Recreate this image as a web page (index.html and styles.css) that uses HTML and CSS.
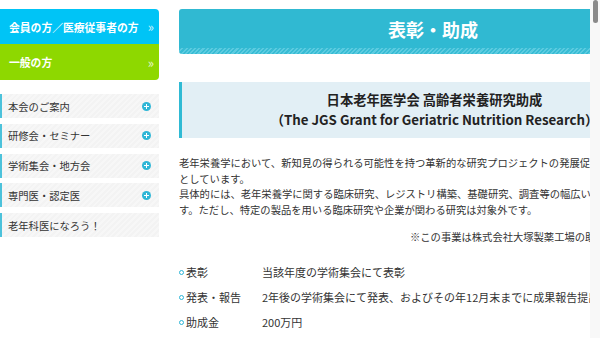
FILE: index.html
```html
<!DOCTYPE html>
<html lang="ja">
<head>
<meta charset="utf-8">
<title>表彰・助成</title>
<link rel="stylesheet" href="styles.css">
</head>
<body>
<div class="page">
  <aside class="sidebar">
    <div class="audience">
      <a class="aud aud-member" href="#"><span>会員の方／医療従事者の方</span><span class="chev">»</span></a>
      <a class="aud aud-general" href="#"><span>一般の方</span><span class="chev">»</span></a>
    </div>
    <ul class="menu">
      <li class="menu-item"><span>本会のご案内</span><span class="plus"></span></li>
      <li class="menu-item"><span>研修会・セミナー</span><span class="plus"></span></li>
      <li class="menu-item"><span>学術集会・地方会</span><span class="plus"></span></li>
      <li class="menu-item"><span>専門医・認定医</span><span class="plus"></span></li>
      <li class="menu-item"><span>老年科医になろう！</span></li>
    </ul>
  </aside>
  <main class="main">
    <h1 class="page-title">表彰・助成</h1>
    <h2 class="sub-title">日本老年医学会 高齢者栄養研究助成<br>（The JGS Grant for Geriatric Nutrition Research）</h2>
    <p class="lead">老年栄養学において、新知見の得られる可能性を持つ革新的な研究プロジェクトの発展促進を目的<br>としています。<br>具体的には、老年栄養学に関する臨床研究、レジストリ構築、基礎研究、調査等の幅広い研究を対象としていま<br>す。ただし、特定の製品を用いる臨床研究や企業が関わる研究は対象外です。</p>
    <p class="note">※この事業は株式会社大塚製薬工場の助成を受けています。</p>
    <dl class="info">
      <div class="info-row"><dt>表彰</dt><dd>当該年度の学術集会にて表彰</dd></div>
      <div class="info-row"><dt>発表・報告</dt><dd>2年後の学術集会にて発表、およびその年12月末までに成果報告提出</dd></div>
      <div class="info-row"><dt>助成金</dt><dd>200万円</dd></div>
    </dl>
  </main>
</div>
<div class="scrollbar"><div class="thumb"></div></div>
</body>
</html>
```

FILE: styles.css
```css
html, body {
  margin: 0;
  padding: 0;
  overflow: hidden;
  background: #fff;
}
body {
  font-family: "Noto Sans CJK JP", "Noto Sans", sans-serif;
  color: #333;
}
.page {
  display: flex;
  gap: 20px;
  padding-top: 9px;
  width: 687px;
}
.sidebar {
  width: 159px;
  flex: none;
}
.audience {
  border-radius: 0 4px 4px 0;
  overflow: hidden;
}
.aud {
  display: flex;
  justify-content: space-between;
  align-items: center;
  padding: 0 5px 0 9px;
  color: #fff;
  text-decoration: none;
  font-weight: bold;
  font-size: 10.8px;
}
.aud-member {
  height: 35px;
  background: #00c4f6;
}
.aud-general {
  height: 36px;
  background: #8ed800;
}
.chev {
  font-size: 13px;
  font-weight: normal;
  color: rgba(255,255,255,0.8);
}
.menu {
  list-style: none;
  margin: 14px 0 0;
  padding: 0;
  display: flex;
  flex-direction: column;
  gap: 5.8px;
}
.menu-item {
  height: 24px;
  display: flex;
  align-items: center;
  justify-content: space-between;
  padding: 0 8px 0 6px;
  border-left: 2px solid #4cc2db;
  background: repeating-linear-gradient(-45deg, #f3f3f3 0 2px, #f7f7f7 2px 4px);
  font-size: 10.3px;
  color: #333;
}
.plus {
  width: 9px;
  height: 9px;
  border-radius: 50%;
  background: #2eb6d6;
  position: relative;
}
.plus::before, .plus::after {
  content: "";
  position: absolute;
  background: #fff;
  left: 2px;
  top: 4px;
  width: 5px;
  height: 1px;
}
.plus::after {
  left: 4px;
  top: 2px;
  width: 1px;
  height: 5px;
}
.main {
  width: 508px;
  flex: none;
}
.page-title {
  margin: 0;
  height: 45px;
  border-radius: 3px;
  background:
    repeating-linear-gradient(-45deg, #5ccbe0 0 1.5px, #38bcd4 1.5px 3px) bottom / 100% 6px no-repeat,
    #30b9d2;
  color: #fff;
  font-size: 18px;
  font-weight: bold;
  text-align: center;
  line-height: 41px;
}
.sub-title {
  margin: 28px 0 0;
  padding: 8px 0;
  border-left: 3px solid #2fbad4;
  background: #e2eff5;
  text-align: center;
  font-size: 13.3px;
  line-height: 20px;
  font-weight: bold;
  color: #222;
  white-space: nowrap;
}
.lead {
  margin: 17px 0 0;
  font-size: 10.3px;
  line-height: 15.5px;
  white-space: nowrap;
}
.note {
  margin: 12px 0 0;
  text-align: right;
  font-size: 10.3px;
  line-height: 15.5px;
}
.info {
  margin: 15px 0 0;
  font-size: 11px;
}
.info-row {
  display: flex;
  height: 25px;
  align-items: center;
}
.info dt {
  width: 83px;
  display: flex;
  align-items: center;
  gap: 2px;
}
.info dt::before {
  content: "";
  width: 3px;
  height: 3px;
  border: 1.8px solid #2bb5d6;
  border-radius: 50%;
}
.info dd {
  margin: 0;
  white-space: nowrap;
}
.scrollbar {
  position: fixed;
  top: 0;
  right: 0;
  width: 10px;
  height: 100%;
  background: #f8f8f8;
}
.thumb {
  margin: 0 auto;
  width: 5px;
  height: 23px;
  border-radius: 3px;
  background: #8a8a8a;
}
```
